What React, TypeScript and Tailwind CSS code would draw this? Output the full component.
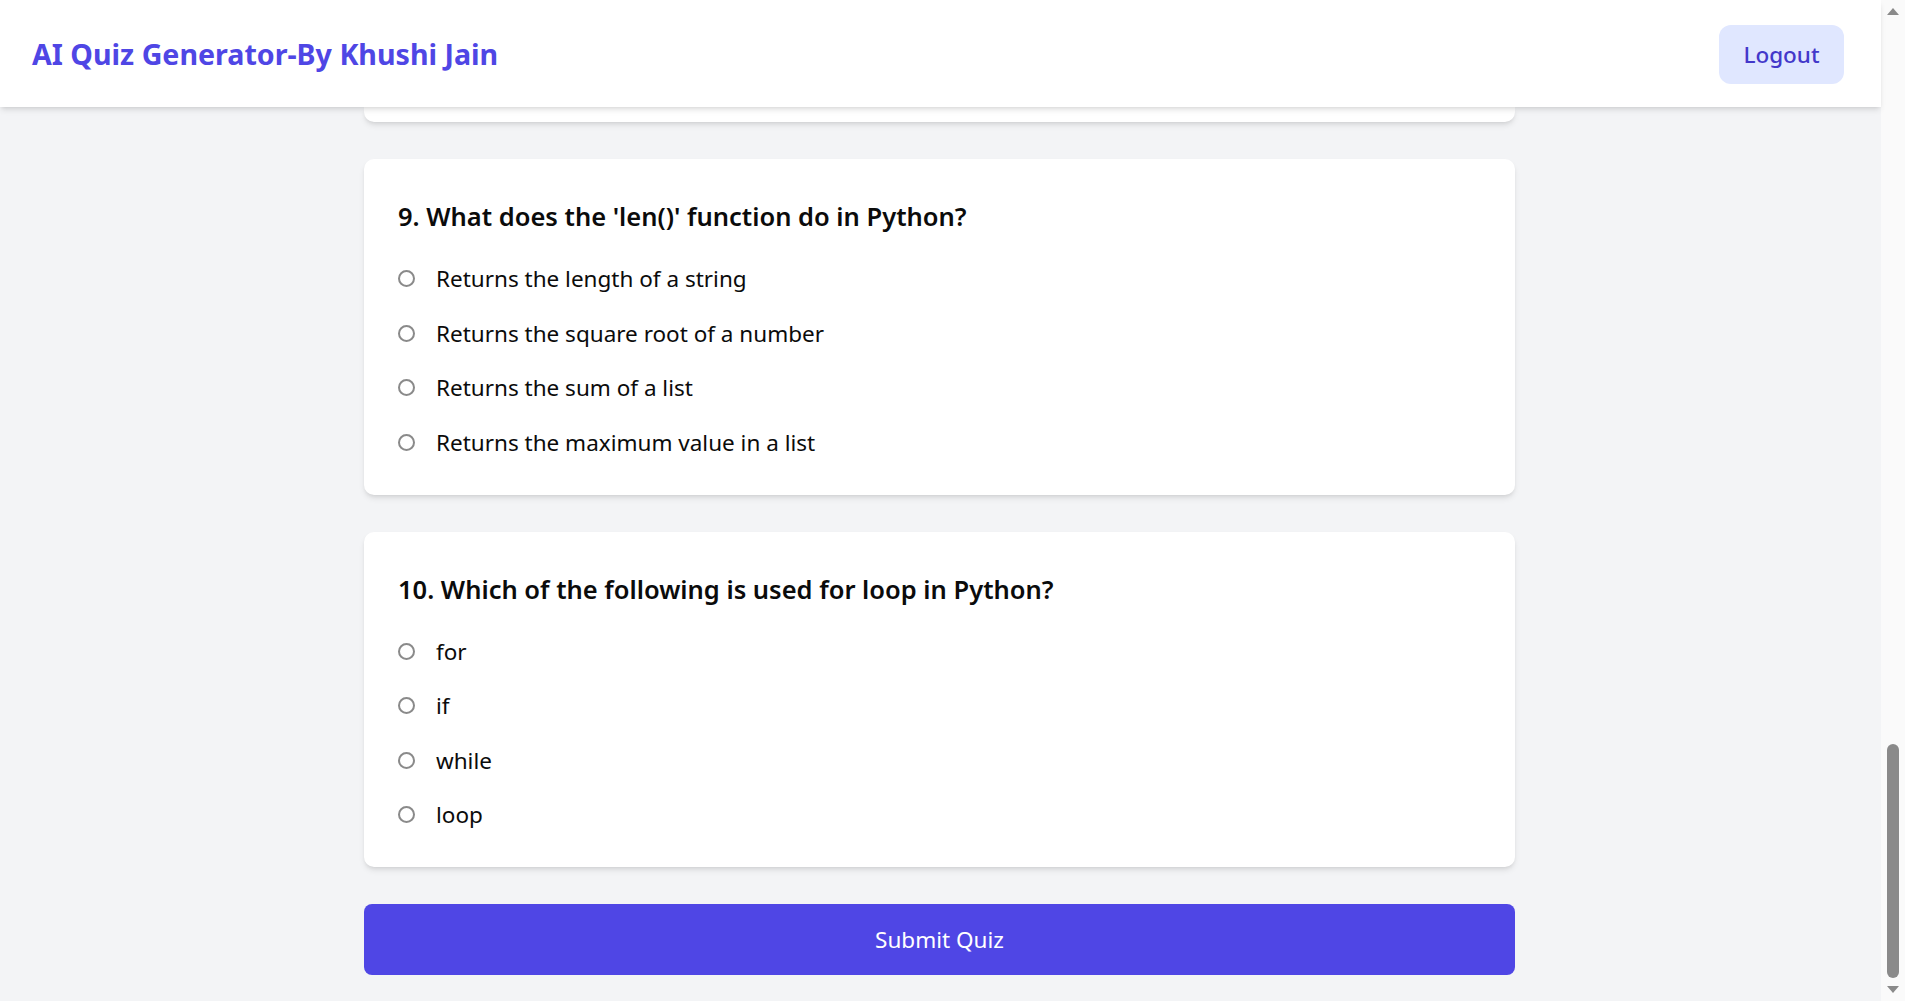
import React from 'react';

type Question = {
  id: number;
  text: string;
  options: string[];
};

const questions: Question[] = [
  {
    id: 9,
    text: "What does the 'len()' function do in Python?",
    options: [
      'Returns the length of a string',
      'Returns the square root of a number',
      'Returns the sum of a list',
      'Returns the maximum value in a list',
    ],
  },
  {
    id: 10,
    text: 'Which of the following is used for loop in Python?',
    options: ['for', 'if', 'while', 'loop'],
  },
];

const font = { fontFamily: '"Noto Sans", "Open Sans", sans-serif' };

const QuestionCard = ({ q }: { q: Question }) => (
  <div className="bg-white rounded-[10px] shadow-md pt-[40px] pb-[35px] pl-[34px] pr-[37px] mb-[37px]">
    <h2 className="text-[25.5px] leading-[35px] font-semibold text-[#0b0b0b]">
      {q.id}. {q.text}
    </h2>
    <div className="mt-[27px] flex flex-col gap-[19.5px]">
      {q.options.map((opt) => (
        <label key={opt} className="flex items-center h-[35px] cursor-pointer">
          <input
            type="radio"
            name={`q${q.id}`}
            className="appearance-none w-[17px] h-[17px] m-0 shrink-0 rounded-full border-2 border-[#8a8a8a] bg-white"
          />
          <span className="ml-[21px] text-[22.5px] leading-[35px] text-[#0b0b0b]">{opt}</span>
        </label>
      ))}
    </div>
  </div>
);

export default function App() {
  return (
    <div className="h-screen overflow-hidden flex bg-[#f3f4f6]" style={font}>
      <div className="flex-1 flex flex-col">
        {/* Top bar */}
        <header className="relative z-10 h-[107px] shrink-0 bg-white shadow-md flex items-center justify-between pl-[32px] pr-[37px] pt-[2px]">
          <h1 className="text-[28.6px] font-bold text-[#4f46e5]">AI Quiz Generator-By Khushi Jain</h1>
          <button className="w-[125px] h-[59px] rounded-[12px] bg-[#e0e7ff] text-[#4338ca] text-[22.5px] font-medium">
            Logout
          </button>
        </header>

        <main className="w-[1151px] mx-auto -translate-x-[1px]">
          {/* tail of previous card, scrolled under the header */}
          <div className="h-[15px] bg-white rounded-b-[10px] shadow-md mb-[37px]" />

          {questions.map((q) => (
            <QuestionCard key={q.id} q={q} />
          ))}

          <button className="w-full h-[71px] rounded-[8px] bg-[#4f46e5] text-white text-[22.5px]">
            Submit Quiz
          </button>
        </main>
      </div>

      {/* window scrollbar */}
      <div className="w-[24px] shrink-0 bg-[#fafafa] flex flex-col items-center justify-between py-[8px]">
        <div className="w-0 h-0 border-l-[6px] border-r-[6px] border-b-[7px] border-l-transparent border-r-transparent border-b-[#8a8a8a]" />
        <div className="flex flex-col items-center gap-[8px]">
          <div className="w-[12px] h-[234px] rounded-full bg-[#8a8a8a]" />
          <div className="w-0 h-0 border-l-[6px] border-r-[6px] border-t-[7px] border-l-transparent border-r-transparent border-t-[#8a8a8a]" />
        </div>
      </div>
    </div>
  );
}
